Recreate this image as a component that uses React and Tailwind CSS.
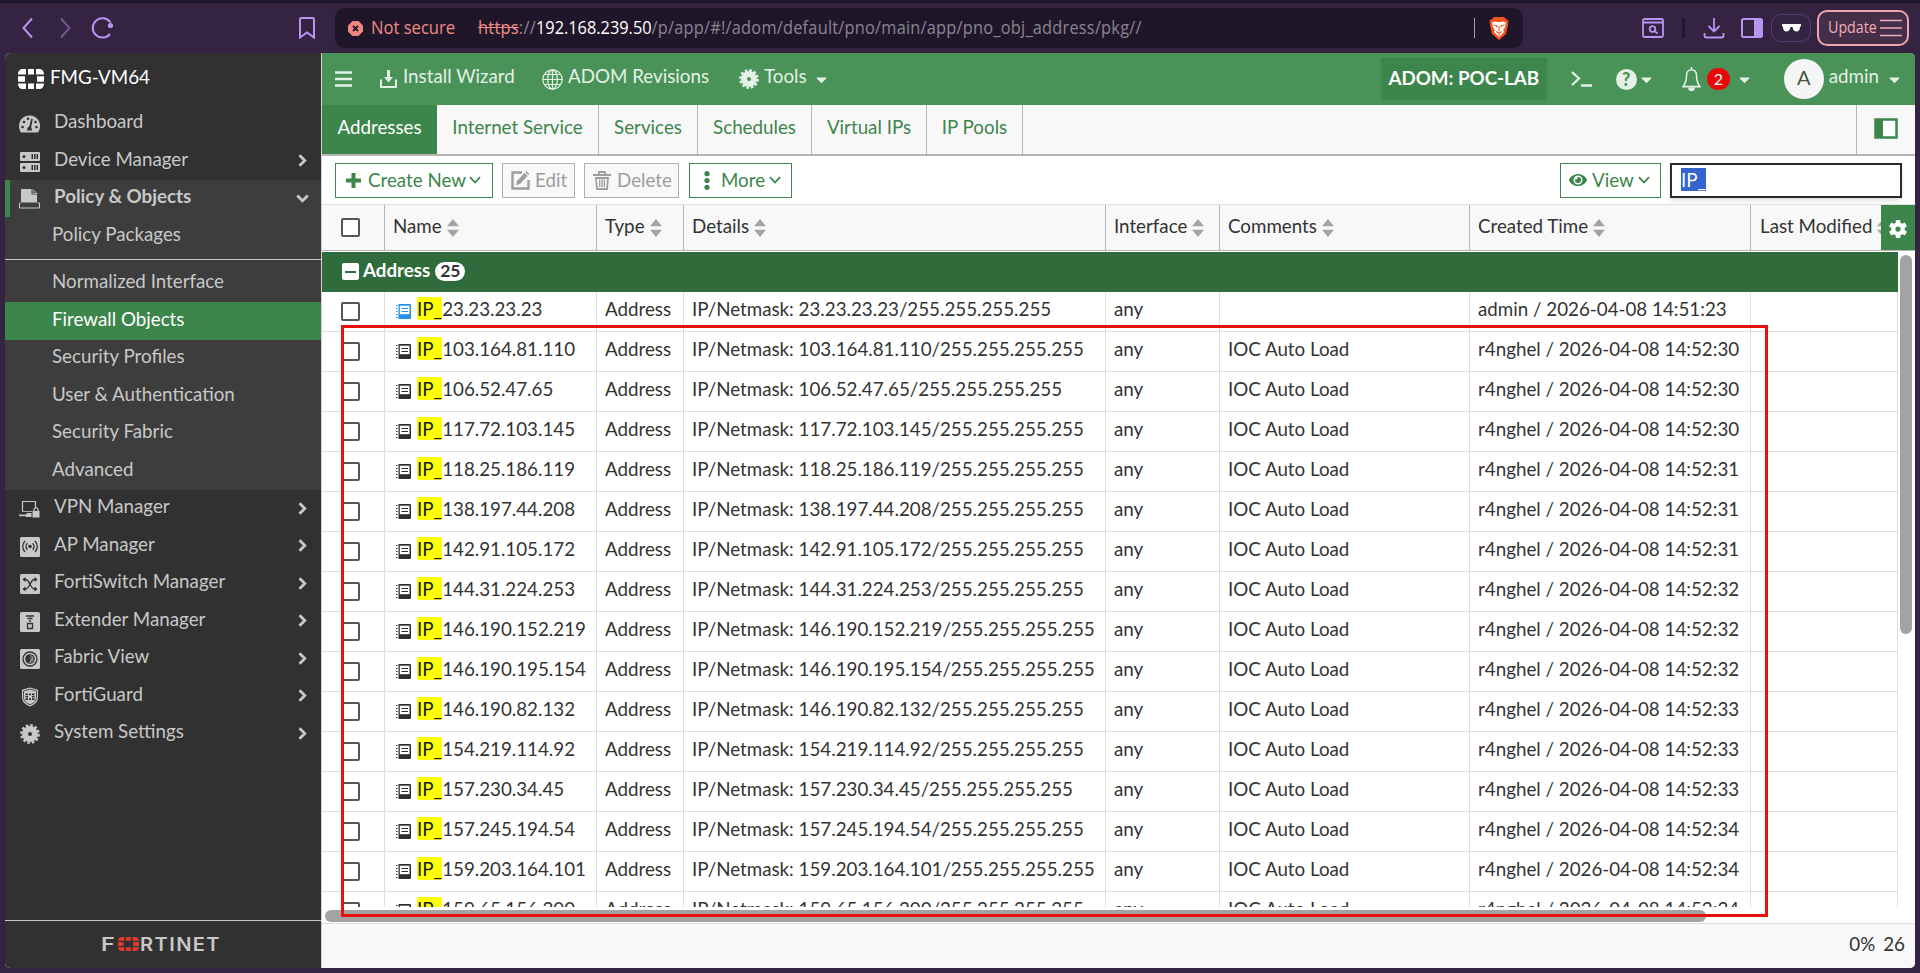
import { FaCaretDown, FaEye } from 'react-icons/fa'

const GREEN = '#3c854b'

const records = [
  ['23.23.23.23', '', 'admin', '14:51:23'],
  ['103.164.81.110', 'IOC Auto Load', 'r4nghel', '14:52:30'],
  ['106.52.47.65', 'IOC Auto Load', 'r4nghel', '14:52:30'],
  ['117.72.103.145', 'IOC Auto Load', 'r4nghel', '14:52:30'],
  ['118.25.186.119', 'IOC Auto Load', 'r4nghel', '14:52:31'],
  ['138.197.44.208', 'IOC Auto Load', 'r4nghel', '14:52:31'],
  ['142.91.105.172', 'IOC Auto Load', 'r4nghel', '14:52:31'],
  ['144.31.224.253', 'IOC Auto Load', 'r4nghel', '14:52:32'],
  ['146.190.152.219', 'IOC Auto Load', 'r4nghel', '14:52:32'],
  ['146.190.195.154', 'IOC Auto Load', 'r4nghel', '14:52:32'],
  ['146.190.82.132', 'IOC Auto Load', 'r4nghel', '14:52:33'],
  ['154.219.114.92', 'IOC Auto Load', 'r4nghel', '14:52:33'],
  ['157.230.34.45', 'IOC Auto Load', 'r4nghel', '14:52:33'],
  ['157.245.194.54', 'IOC Auto Load', 'r4nghel', '14:52:34'],
  ['159.203.164.101', 'IOC Auto Load', 'r4nghel', '14:52:34'],
  ['159.65.156.200', 'IOC Auto Load', 'r4nghel', '14:52:34'],
]

const tabs = [
  { label: 'Addresses', width: 'w-[115px]' },
  { label: 'Internet Service', width: 'w-[162px]' },
  { label: 'Services', width: 'w-[99px]' },
  { label: 'Schedules', width: 'w-[114px]' },
  { label: 'Virtual IPs', width: 'w-[115px]' },
  { label: 'IP Pools', width: 'w-[96px]' },
]

const subItems = ['Normalized Interface', 'Firewall Objects', 'Security Profiles', 'User & Authentication', 'Security Fabric', 'Advanced']

const GRID = 'grid grid-cols-[63px_212px_87px_422px_114px_250px_281px_147px]'

/* ---------- icons ---------- */

function Gear({ size = 20, hole = '#313131' }) {
  return (
    <svg width={size} height={size} viewBox="0 0 20 20">
      <circle cx="10" cy="10" r="8" fill="currentColor" />
      <circle cx="10" cy="10" r="8.7" fill="none" stroke="currentColor" strokeWidth="2.4" strokeDasharray="2.6 1.955" />
      <circle cx="10" cy="10" r="2" fill={hole} />
    </svg>
  )
}

function DashboardIcon() {
  return (
    <svg width="21" height="18" viewBox="0 0 21 18">
      <path d="M2 17.5C.7 15.500 0 13.500 0 11 0 5 4.500.5 10.500.5S21 5 21 11c0 2.500-.7 4.500-2 6.500z" fill="currentColor" />
      <g fill="#313131">
        <circle cx="3.500" cy="12" r="1.300" />
        <circle cx="5" cy="7" r="1.300" />
        <circle cx="9" cy="3.800" r="1.300" />
        <circle cx="16.500" cy="7" r="1.300" />
        <circle cx="17.500" cy="12" r="1.300" />
        <path d="M12.300 3.500l1.500.5-1.600 8 .9 3.500H7.900l.8-3 1.500-1z" />
      </g>
    </svg>
  )
}

function ServersIcon() {
  return (
    <svg width="20" height="20" viewBox="0 0 20 20">
      <rect width="20" height="9" rx="1" fill="currentColor" />
      <rect y="11" width="20" height="9" rx="1" fill="currentColor" />
      <g fill="#313131">
        <circle cx="4" cy="4.500" r="1.500" />
        <circle cx="4" cy="15.500" r="1.500" />
        <path d="M11.500 2h1.500v5h-1.500zM14 2h1.500v5H14zM16.500 2H18v5h-1.500zM11.500 13h1.500v5h-1.500zM14 13h1.500v5H14zM16.500 13H18v5h-1.500z" />
      </g>
    </svg>
  )
}

function PolicyIcon() {
  return (
    <svg width="21" height="20" viewBox="0 0 21 20">
      <path d="M2 0h10.500v5.500H18V13.500H2z" fill="currentColor" />
      <path d="M14 .5l4 4h-4z" fill="none" stroke="currentColor" strokeWidth=".8" />
      <path d="M1.500 14H.5v5h20v-5h-2" fill="none" stroke="currentColor" />
    </svg>
  )
}

function VpnIcon() {
  return (
    <svg width="21" height="18" viewBox="0 0 21 18">
      <path d="M3.500 11V1.500h13V8" fill="none" stroke="currentColor" strokeWidth="1.200" />
      <path d="M3 11.500h10" stroke="currentColor" strokeWidth=".8" />
      <path d="M0 14.500h7l1-1.500h4.500v4H7v-.8H0z" fill="currentColor" />
      <rect x="13.500" y="11" width="7" height="6.500" fill="currentColor" />
      <path d="M15 11.500V9.800a2 2 0 0 1 4 0v1.700" fill="none" stroke="currentColor" strokeWidth="1.200" />
    </svg>
  )
}

function Tile({ children }) {
  return (
    <svg width="20" height="20" viewBox="0 0 20 20" fill="none" stroke="#313131" strokeWidth="1.300">
      <rect width="20" height="20" rx="1.500" fill="currentColor" stroke="none" />
      {children}
    </svg>
  )
}

function ApIcon() {
  return (
    <Tile>
      <circle cx="10" cy="9.500" r="1.800" fill="#313131" stroke="none" />
      <path d="M7.300 6.300c-1.700 1.700-1.700 4.800 0 6.500M12.700 6.300c1.700 1.700 1.700 4.800 0 6.500M5 4c-3 3-3 8 0 11M15 4c3 3 3 8 0 11" />
    </Tile>
  )
}

function SwitchIcon() {
  return (
    <Tile>
      <path d="M3 5.500h3c3 0 5 9.500 8 9.500h2.500M3 15h3c3 0 5-9.500 8-9.500h2.500" />
      <path d="M14.500 3l3 2.500-3 2.500zM14.500 12.500l3 2.500-3 2.500zM5.500 3l-3 2.500 3 2.500zM5.500 12.500l-3 2.500 3 2.500z" fill="#313131" stroke="none" />
    </Tile>
  )
}

function ExtenderIcon() {
  return (
    <Tile>
      <path d="M6 4h8M7.500 6.500h5M9 9h2M7.500 11.500h5v5h-5z" />
    </Tile>
  )
}

function FabricIcon() {
  return (
    <Tile>
      <circle cx="10" cy="10" r="7" />
      <circle cx="10" cy="10" r="4.800" fill="#313131" stroke="none" />
      <path d="M11 6v8M12.800 7v6M9 14l4-5" stroke="currentColor" strokeWidth=".7" />
    </Tile>
  )
}

function GuardIcon() {
  return (
    <svg width="18" height="20" viewBox="0 0 18 20">
      <path d="M9 .5l8 2.300v7.700c0 4.500-3.500 7.300-8 9-4.500-1.700-8-4.500-8-9V2.800z" fill="currentColor" />
      <path d="M9 2.200l6.500 1.900v6.300c0 3.500-2.800 5.900-6.500 7.300-3.700-1.400-6.500-3.800-6.500-7.300V4.100z" fill="none" stroke="#313131" strokeWidth=".8" />
      <path d="M4.500 6.500h2.500v1.700H4.500zM8 6.500h2v1.700H8zM11 6.500h2.500v1.700H11zM4.500 9h2.500v1.500H4.500zM11 9h2.500v1.500H11zM4.500 11.300h2.500V13H4.500zM8 11.300h2V13H8zM11 11.300h2.500V13H11z" fill="#313131" />
    </svg>
  )
}

// brick "O" shared by the host mark and the footer brand
function BrickMark({ width, height }) {
  return (
    <svg width={width} height={height} viewBox="0 0 26 20" preserveAspectRatio="none" fill="currentColor">
      <path d="M5 0h3v5.500H0C0 2 2 0 5 0zM10 0h6v5.500h-6zM18 0h3c3 0 5 2 5 5.500h-8zM0 7.300h7v5.400H0zM19 7.300h7v5.400h-7zM0 14.500h8V20H5c-3 0-5-2-5-5.500zM10 14.500h6V20h-6zM18 14.500h8c0 3.500-2 5.500-5 5.500h-3z" />
    </svg>
  )
}

function AddressIcon({ blue }) {
  return (
    <svg width="15" height="15" viewBox="0 0 15 15" className={blue ? 'text-[#2490ea]' : 'text-[#2e2e2e]'}>
      <path d="M2.500 0h11.300A1.200 1.200 0 0 1 15 1.200v12.600a1.200 1.200 0 0 1-1.200 1.200H2.500z" fill="currentColor" />
      <path d="M3.800 1.700h9.700v8.500H3.800z" fill="#fff" />
      <path d="M5.500 4.500h6.500M5.500 7.500h6.500" stroke="currentColor" strokeWidth="1" />
      <path d="M0 1.500h1.500M0 4.500h1.500M0 7.500h1.500M0 10.500h1.500M0 13.500h1.500" stroke="currentColor" strokeWidth="1.200" />
    </svg>
  )
}

function Sort() {
  return (
    <svg width="12" height="18" viewBox="0 0 12 18" fill="#a3a3a3" className="ml-[5px] shrink-0">
      <path d="M6 0l6 7.300H0zM6 18l6-7.300H0z" />
    </svg>
  )
}

function Checkbox() {
  return <span className="block h-[19px] w-[19px] rounded-[2px] border-2 border-[#555] bg-white" />
}

function Caret() {
  return (
    <svg width="12" height="8" viewBox="0 0 12 8" fill="none" stroke="currentColor" strokeWidth="1.800">
      <path d="M1 1.200l5 5.300 5-5.300" />
    </svg>
  )
}

/* ---------- browser bar ---------- */

function BrowserBar() {
  return (
    <div className="flex h-[53px] shrink-0 items-center border-t-[3px] border-[#1d162a] pt-1.5 pb-1.5 text-[#b794f0]">
      <svg width="92" height="28" viewBox="0 0 92 28" fill="none" stroke="currentColor" strokeWidth="2" className="ml-[22px]">
        <path d="M10 4.500L1.500 14l8.500 9.500" />
        <path d="M39 4.500l8.500 9.500-8.500 9.500" opacity=".45" />
        <path d="M88 20a9.700 9.700 0 1 1 .5-11.500" />
        <circle cx="88.500" cy="11.500" r="2.600" fill="currentColor" stroke="none" />
      </svg>
      <svg width="16" height="22" viewBox="0 0 16 22" fill="none" stroke="currentColor" strokeWidth="2" className="ml-[185px]">
        <path d="M1 2.500A1.500 1.500 0 0 1 2.500 1h11A1.500 1.500 0 0 1 15 2.500V20.500l-7-5-7 5z" />
      </svg>
      <div className="ml-[20px] flex h-10 w-[1188px] shrink-0 items-center rounded-[10px] bg-[#1f1729] pl-[13px] text-[17.300px] font-['Open_Sans',sans-serif]">
        <svg width="15" height="15" viewBox="0 0 15 15">
          <path d="M4.500 0h6L15 4.500v6L10.500 15h-6L0 10.500v-6z" fill="#f0857f" />
          <path d="M5 5l5 5M10 5l-5 5" stroke="#1f1729" strokeWidth="1.800" />
        </svg>
        <span className="ml-[8px] w-[107px] shrink-0 whitespace-nowrap text-[#f08a86]"><span className="inline-block origin-left scale-x-[0.96]">Not secure</span></span>
        <span className="w-[996px] shrink-0 whitespace-nowrap text-[#8a8491]">
          <span className="inline-block origin-left scale-x-[0.945]">
            <span className="tracking-[0.3px]"><span className="text-[#f08a86] line-through">https</span>://</span>
            <span className="text-white">192.168.239.50</span>
            <span className="tracking-[0.25px]">/p/app/#!/adom/default/pno/main/app/pno_obj_address/pkg//</span>
          </span>
        </span>
        <span className="h-5 w-px bg-[#a59fad]" />
        <svg width="20" height="23" viewBox="0 0 20 23" className="ml-[14px] shrink-0">
          <path d="M5 0h10l2 2 2.500 1.500L19 8l-2 9-7 6-7-6L1 8 .5 3.500 3 2z" fill="#f4511e" />
          <path d="M3 5.500l3-1 4 .8 4-.8 3 1-1 5-2 2.500 1 2-5 5-5-5 1-2-2-2.500z" fill="#fff" />
          <path d="M4.500 8l3.500.8-.5 1.500M15.500 8l-3.500.8.500 1.500M10 9v5M7 14.500l3 1.500 3-1.500M10 16v3" fill="none" stroke="#f4511e" strokeWidth="1.100" />
        </svg>
      </div>
      <svg width="22" height="20" viewBox="0 0 22 20" fill="none" stroke="currentColor" strokeWidth="1.800" className="ml-[119px]">
        <rect x="1" y="1" width="20" height="18" rx="1.500" />
        <path d="M1 4.500h20M12.500 13l3 2.500" />
        <circle cx="10.500" cy="11" r="2.800" />
      </svg>
      <span className="ml-[18px] h-5 w-[3px] bg-[#1f1729]" />
      <svg width="22" height="22" viewBox="0 0 22 22" fill="none" stroke="currentColor" strokeWidth="1.800" className="ml-[18px]">
        <path d="M11 1v13M5.500 9l5.500 5.500L16.500 9M1.500 16v2.500a2 2 0 0 0 2 2h15a2 2 0 0 0 2-2V16" />
      </svg>
      <svg width="22" height="20" viewBox="0 0 22 20" className="ml-[16px]">
        <rect x="1" y="1" width="20" height="18" rx="1.500" fill="none" stroke="currentColor" strokeWidth="2" />
        <path d="M13 1h7a1 1 0 0 1 1 1v16a1 1 0 0 1-1 1h-7z" fill="currentColor" />
      </svg>
      <span className="ml-[8px] flex h-7 w-10 items-center justify-center rounded-[10px] border border-[#4e3f74]">
        <svg width="19" height="8" viewBox="0 0 19 8" fill="#fff">
          <path d="M0 0h19v2l-1 1c0 3-1.500 4.500-3.500 4.500S11 6 10.500 3h-2C8 6 6.500 7.500 4.500 7.500S1 6 1 3L0 2z" />
        </svg>
      </span>
      <span className="ml-[6px] flex h-9 w-[92px] items-center rounded-[10px] border-2 border-[#eda5b0] bg-[#452f48] pl-[9px] font-['Open_Sans',sans-serif] text-[15.500px] text-[#f1abb6]">
        <span className="w-[52px] whitespace-nowrap"><span className="inline-block origin-left scale-x-[0.92]">Update</span></span>
        <svg width="22" height="18" viewBox="0 0 22 18" stroke="currentColor" strokeWidth="1.700">
          <path d="M0 1.500h22M0 9h22M0 16.500h22" />
        </svg>
      </span>
    </div>
  )
}

/* ---------- sidebar ---------- */

function NavItem({ icon, label, arrow = true, active }) {
  return (
    <div className={`flex h-[37.5px] items-center ${active ? 'border-l-[5px] border-[#3c854b] bg-[#3d3d3d] pl-[9px] font-bold' : 'pl-[14px]'}`}>
      <span className="flex w-[21px] justify-center pt-[2px]">{icon}</span>
      <span className="ml-[14px] flex-1 pb-[4px] whitespace-nowrap">{label}</span>
      {arrow && (
        <svg width="13" height="13" viewBox="0 0 13 13" fill="none" stroke="currentColor" strokeWidth="2.800" className={active ? 'mr-[12px] rotate-90' : 'mr-[12px]'}>
          <path d="M3.500 1.200l5.300 5.300-5.300 5.300" />
        </svg>
      )}
    </div>
  )
}

function SubItem({ label, active }) {
  return (
    <div className={`flex h-[37.5px] items-center pb-[4px] pl-[47px] whitespace-nowrap ${active ? 'bg-[#3c854b] text-white' : ''}`}>
      {label}
    </div>
  )
}

function Sidebar() {
  return (
    <aside className="flex w-[316px] shrink-0 flex-col bg-[#313131] text-[18.750px] text-[#c8c8c8]">
      <div className="flex h-[51.500px] items-center pl-[13px] text-white">
        <BrickMark width={26} height={20} />
        <span className="ml-[6px] pb-[4px]">FMG-VM64</span>
      </div>
      <NavItem icon={<DashboardIcon />} label="Dashboard" arrow={false} />
      <NavItem icon={<ServersIcon />} label="Device Manager" />
      <NavItem icon={<PolicyIcon />} label="Policy & Objects" active />
      <div className="bg-[#3d3d3d]">
        <SubItem label="Policy Packages" />
        <div className="mt-[4.500px] mb-[4.500px] h-px bg-[#c8c8c8]" />
        {subItems.map((s) => <SubItem key={s} label={s} active={s === 'Firewall Objects'} />)}
      </div>
      <NavItem icon={<VpnIcon />} label="VPN Manager" />
      <NavItem icon={<ApIcon />} label="AP Manager" />
      <NavItem icon={<SwitchIcon />} label="FortiSwitch Manager" />
      <NavItem icon={<ExtenderIcon />} label="Extender Manager" />
      <NavItem icon={<FabricIcon />} label="Fabric View" />
      <NavItem icon={<GuardIcon />} label="FortiGuard" />
      <NavItem icon={<Gear />} label="System Settings" />
      <div className="mt-auto flex h-[48px] items-center border-t border-[#c8c8c8] pb-px pl-[96px] font-['Inter',sans-serif] text-[18.600px] leading-none font-semibold">
        <span className="w-[17px]"><span className="inline-block origin-left scale-x-[1.25]">F</span></span>
        <span className="text-[#e03a2e]"><BrickMark width={21} height={14} /></span>
        <span className="ml-px inline-block origin-left scale-x-[1.08] tracking-[1.300px]">RTINET</span>
      </div>
    </aside>
  )
}

/* ---------- main area ---------- */

function TopBar() {
  return (
    <div className="flex h-[52px] shrink-0 items-center bg-[#4a9358] text-[18.750px] text-[#e4f1e6]">
      <svg width="17" height="16" viewBox="0 0 17 16" stroke="currentColor" strokeWidth="2.400" className="ml-[13px]">
        <path d="M0 1.500h17M0 8h17M0 14.500h17" />
      </svg>
      <svg width="17" height="18" viewBox="0 0 17 18" className="ml-[28px]">
        <path d="M1 9.500V17h15V9.500" fill="none" stroke="currentColor" strokeWidth="2" />
        <path d="M7 0h3v7h3l-4.500 5.500L4 7h3z" fill="currentColor" />
      </svg>
      <span className="ml-[6px] w-[139px] pb-[5px] whitespace-nowrap">Install Wizard</span>
      <svg width="21" height="21" viewBox="0 0 21 21" fill="none" stroke="currentColor" strokeWidth="1.200">
        <circle cx="10.500" cy="10.500" r="9.700" />
        <ellipse cx="10.500" cy="10.500" rx="4.800" ry="9.700" />
        <path d="M10.500.8v19.400M.8 10.500h19.400M2.500 5.500h16M2.500 15.500h16" />
      </svg>
      <span className="ml-[5px] w-[171px] pb-[5px] whitespace-nowrap">ADOM Revisions</span>
      <Gear hole="#4a9358" />
      <span className="ml-[5px] pb-[5px]">Tools</span>
      <FaCaretDown size={17} className="ml-[6px]" />

      <span className="ml-auto flex h-[42px] w-[166px] items-center justify-center bg-[#3c854b] pb-[1px] font-bold text-white">ADOM: POC-LAB</span>
      <svg width="21" height="16" viewBox="0 0 21 16" fill="none" stroke="currentColor" strokeWidth="2.300" className="ml-[24px]">
        <path d="M1 1l7 6.500L1 14M10 14.500h11" />
      </svg>
      <span className="ml-[24px] flex h-[21px] w-[21px] items-center justify-center rounded-full bg-[#e4f1e6] text-[18px] font-black text-[#4a9358]">?</span>
      <FaCaretDown size={17} className="ml-[1px]" />
      <svg width="19" height="24" viewBox="0 0 19 22" preserveAspectRatio="none" fill="none" stroke="currentColor" strokeWidth="1.500" className="ml-[27px]">
        <path d="M9.500 2.500C6 2.500 4.500 5 4.500 8c0 5-1.500 7.500-3.500 10h17c-2-2.500-3.500-5-3.500-10 0-3-1.500-5.500-5-5.500zM9.500 0v2.500" />
        <path d="M7 19.500a2.500 2 0 0 0 5 0z" fill="currentColor" />
      </svg>
      <span className="ml-[6px] flex h-[22px] w-[23px] items-center justify-center rounded-full bg-[#ea0707] text-[16px] leading-none text-white">2</span>
      <FaCaretDown size={17} className="ml-[6px]" />
      <span className="ml-[31px] flex h-10 w-10 items-center justify-center rounded-full bg-[#f5f5f5] pb-[4px] text-[20px] text-[#3d5a43]">A</span>
      <span className="ml-[5px] pb-[5px]">admin</span>
      <FaCaretDown size={17} className="mr-[12px] ml-[7px]" />
    </div>
  )
}

function TabStrip() {
  return (
    <div className="flex h-[51px] shrink-0 border-b-2 border-[#b5b5b5] bg-[#f8f8f8] text-[18.750px]">
      {tabs.map((t, i) => (
        <span
          key={t.label}
          className={`flex items-center justify-center pb-[4px] whitespace-nowrap ${t.width} ${i === 0 ? 'bg-[#3c854b] text-white' : 'border-r border-[#b5b5b5] text-[#3c854b]'}`}
        >
          {t.label}
        </span>
      ))}
      <span className="ml-auto flex w-[59px] items-center border-l border-[#b5b5b5] pb-[2px] pl-[17px]">
        <svg width="24" height="21" viewBox="0 0 24 21">
          <rect x="1.500" y="1.500" width="21" height="18" fill="#fff" stroke={GREEN} strokeWidth="2.500" />
          <path d="M1 1h8v19H1z" fill={GREEN} />
        </svg>
      </span>
    </div>
  )
}

function Toolbar() {
  return (
    <div className="flex h-[48px] shrink-0 items-center bg-white pl-[13px] text-[18.750px] text-[#3c854b]">
      <button className="flex h-[35px] w-[158px] items-center border border-[#3c854b] pl-[10px]">
        <svg width="15" height="15" viewBox="0 0 15 15" stroke="currentColor" strokeWidth="4">
          <path d="M7.500 0v15M0 7.500h15" />
        </svg>
        <span className="mr-[3px] ml-[7px] whitespace-nowrap">Create New</span>
        <Caret />
      </button>
      <button className="ml-[9px] flex h-[35px] w-[73px] items-center border border-[#b0b0b0] bg-[#f8f8f8] pl-[8px] text-[#9d9d9d]">
        <svg width="19" height="19" viewBox="0 0 19 19">
          <path d="M11 1.500H1.500v16h16V9" fill="none" stroke="currentColor" strokeWidth="2.400" />
          <path d="M5 14l1-4 7.500-8 3 3-7.500 8z" fill="currentColor" />
          <path d="M14.300 1.200l1-1.200 3 3-1 1.200z" fill="currentColor" />
        </svg>
        <span className="ml-[5px]">Edit</span>
      </button>
      <button className="ml-[9px] flex h-[35px] w-[95px] items-center border border-[#b0b0b0] bg-[#f8f8f8] pl-[8px] text-[#9d9d9d]">
        <svg width="18" height="19" viewBox="0 0 18 19" fill="none" stroke="currentColor">
          <path d="M0 4h18M6 3.500V1h6v2.500" strokeWidth="1.800" />
          <path d="M3 7h12l-1 11H4z" strokeWidth="1.800" />
          <path d="M6.700 8.500V16M9 8.500V16M11.300 8.500V16" strokeWidth="1.300" />
        </svg>
        <span className="ml-[6px]">Delete</span>
      </button>
      <button className="ml-[10px] flex h-[35px] w-[103px] items-center border border-[#3c854b] pl-[14px]">
        <svg width="6" height="19" viewBox="0 0 6 19" fill="currentColor">
          <circle cx="3" cy="2.700" r="2.600" />
          <circle cx="3" cy="9.500" r="2.600" />
          <circle cx="3" cy="16.300" r="2.600" />
        </svg>
        <span className="mr-[4px] ml-[11px]">More</span>
        <Caret />
      </button>
      <button className="ml-auto flex h-[35px] w-[101px] items-center border border-[#3c854b] pl-[8px]">
        <FaEye size={18} />
        <span className="mr-[4px] ml-[5px]">View</span>
        <Caret />
      </button>
      <div className="mr-[13px] ml-[9px] flex h-[35px] w-[232px] items-center border-2 border-[#2b2b2b] bg-white pb-px pl-[9px] shadow-md">
        <span className="bg-[#3465cf] leading-[23px] text-white">IP_</span>
      </div>
    </div>
  )
}

function HeaderCell({ children }) {
  return (
    <div className="flex items-center overflow-hidden border-r border-[#b5b5b5] pl-[8px] whitespace-nowrap">
      <span className="pb-[2px]">{children}</span>
      <Sort />
    </div>
  )
}

function TableHeader() {
  return (
    <div className="flex h-[47px] shrink-0 border-t border-b border-t-[#dedede] border-b-[#b5b5b5] bg-[#f8f8f8]">
      <div className="grid w-[1559px] shrink-0 grid-cols-[63px_212px_87px_422px_114px_250px_281px_130px]">
        <div className="flex items-center border-r border-[#b5b5b5] pl-[19px]"><Checkbox /></div>
        <HeaderCell>Name</HeaderCell>
        <HeaderCell>Type</HeaderCell>
        <HeaderCell>Details</HeaderCell>
        <HeaderCell>Interface</HeaderCell>
        <HeaderCell>Comments</HeaderCell>
        <HeaderCell>Created Time</HeaderCell>
        <div className="flex items-center overflow-hidden pl-[9px] whitespace-nowrap">
          <span className="pb-[2px]">Last Modified</span>
          <Sort />
        </div>
      </div>
      <div className="flex flex-1 items-center justify-center bg-[#3c854b] pt-[2px] text-white">
        <svg width="18" height="18" viewBox="0 0 24 24" fill="currentColor" fillRule="evenodd">
          <path d="M9 0h6v3.500l2.800 1.600 3.200-1.800 3 5.200-3 1.900v3.200l3 1.900-3 5.200-3.200-1.800-2.800 1.600V24H9v-3.500l-2.800-1.600L3 20.700l-3-5.200 3-1.900v-3.200L0 8.500l3-5.200 3.200 1.800L9 3.500zM12 8.500a3.500 3.500 0 1 0 0 7 3.500 3.500 0 0 0 0-7z" />
        </svg>
      </div>
    </div>
  )
}

function Row({ record, first }) {
  const [ip, comment, user, time] = record
  const cell = 'border-r border-[#dedede] pl-[8px] pb-[4px] flex items-center whitespace-nowrap'
  return (
    <div className={`${GRID} h-10 shrink-0 border-b border-[#dedede]`}>
      <div className="flex items-center border-r border-[#dedede] pl-[19px]"><Checkbox /></div>
      <div className="flex items-center border-r border-[#dedede] pl-[11px] whitespace-nowrap">
        <AddressIcon blue={first} />
        <span className="ml-[6px] pb-[4px]">
          <span className="rounded-[2px] bg-[#ffff00] text-[#1a1a1a]">IP_</span>{ip}
        </span>
      </div>
      <div className={cell}>Address</div>
      <div className={cell}>IP/Netmask: {ip}/255.255.255.255</div>
      <div className={cell}>any</div>
      <div className={cell}>{comment}</div>
      <div className={cell}>{user} / 2026-04-08 {time}</div>
      <div className={cell} />
    </div>
  )
}

function AddressTable() {
  return (
    <div className="relative flex h-[719px] flex-col bg-white text-[18.750px] text-[#333]">
      <TableHeader />
      <div className="mt-px flex h-[655px]">
        <div className="flex w-[1576px] flex-col overflow-hidden">
          <div className="flex h-10 shrink-0 items-center bg-[#2f6b3b] pb-[4px] pl-[20px] font-bold text-white">
            <span className="mt-[3px] flex h-[17px] w-[17px] items-center justify-center rounded-[2px] bg-white">
              <span className="h-[2px] w-[11px] bg-[#2f6b3b]" />
            </span>
            <span className="ml-[4px]">Address</span>
            <span className="mt-[2px] ml-[5px] flex h-[19px] w-[30px] items-center justify-center rounded-full bg-white text-[17.500px] leading-none text-[#333]">25</span>
          </div>
          {records.map((r, i) => <Row key={r[0]} record={r} first={i === 0} />)}
        </div>
        <div className="mt-[3px] ml-[2px] h-[379px] w-[12px] rounded-full bg-[#a3a3a3]" />
      </div>
      <div className="mt-[3px] ml-[3px] h-[12px] w-[1381px] rounded-full bg-[#a3a3a3]" />
      {/* annotation frame over the imported rows */}
      <div className="absolute top-[121px] left-[19px] h-[592px] w-[1427px] border-[3px] border-[#ea0f0f]" />
    </div>
  )
}

export default function App() {
  return (
    <div className="flex h-[973px] w-[1920px] flex-col overflow-hidden bg-[#352441] font-['Lato',sans-serif]">
      <BrowserBar />
      <div className="mx-[5px] flex h-[915px] overflow-hidden rounded-[5px] bg-white">
        <Sidebar />
        <main className="flex flex-1 flex-col border-l border-[#d0d0d0]">
          <TopBar />
          <TabStrip />
          <Toolbar />
          <AddressTable />
          <footer className="flex flex-1 items-center justify-end gap-[8px] border-t border-[#dedede] bg-[#f8f8f8] pr-[10px] pb-[3px] text-[18.750px] text-[#333]">
            <span>0%</span>
            <span>26</span>
          </footer>
        </main>
      </div>
    </div>
  )
}
